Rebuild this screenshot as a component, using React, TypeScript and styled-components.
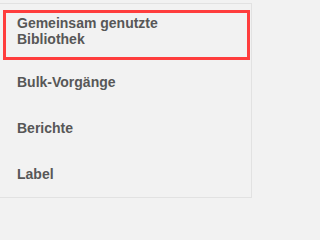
import styled, { createGlobalStyle } from 'styled-components';

const GlobalStyle = createGlobalStyle`
  html, body {
    margin: 0;
    padding: 0;
    background: #f2f2f2;
  }
  body {
    font-family: "Liberation Sans", Arial, sans-serif;
  }
`;

const Panel = styled.nav`
  width: 252px;
  height: 195px;
  margin-top: 3px;
  box-sizing: border-box;
  background: #f2f2f2;
  border-top: 1px solid #e2e2e2;
  border-right: 1px solid #e2e2e2;
  border-bottom: 1px solid #e2e2e2;
  padding-top: 6px;
  display: flex;
  flex-direction: column;
`;

const Item = styled.div<{ $active?: boolean }>`
  font-size: 14px;
  font-weight: bold;
  line-height: 16px;
  color: #575757;
  box-sizing: border-box;
  padding: ${(p) => (p.$active ? '2px 0 10px 11px' : '14px 0 16px 17px')};
  margin: ${(p) => (p.$active ? '0 1px 0 3px' : '0')};
  border: ${(p) => (p.$active ? '3px solid #ff3d3d' : 'none')};
`;

const items = ['Bulk-Vorgänge', 'Berichte', 'Label'];

export default function App() {
  return (
    <>
      <GlobalStyle />
      <Panel>
        <Item $active>
          Gemeinsam genutzte
          <br />
          Bibliothek
        </Item>
        {items.map((label) => (
          <Item key={label}>{label}</Item>
        ))}
      </Panel>
    </>
  );
}
